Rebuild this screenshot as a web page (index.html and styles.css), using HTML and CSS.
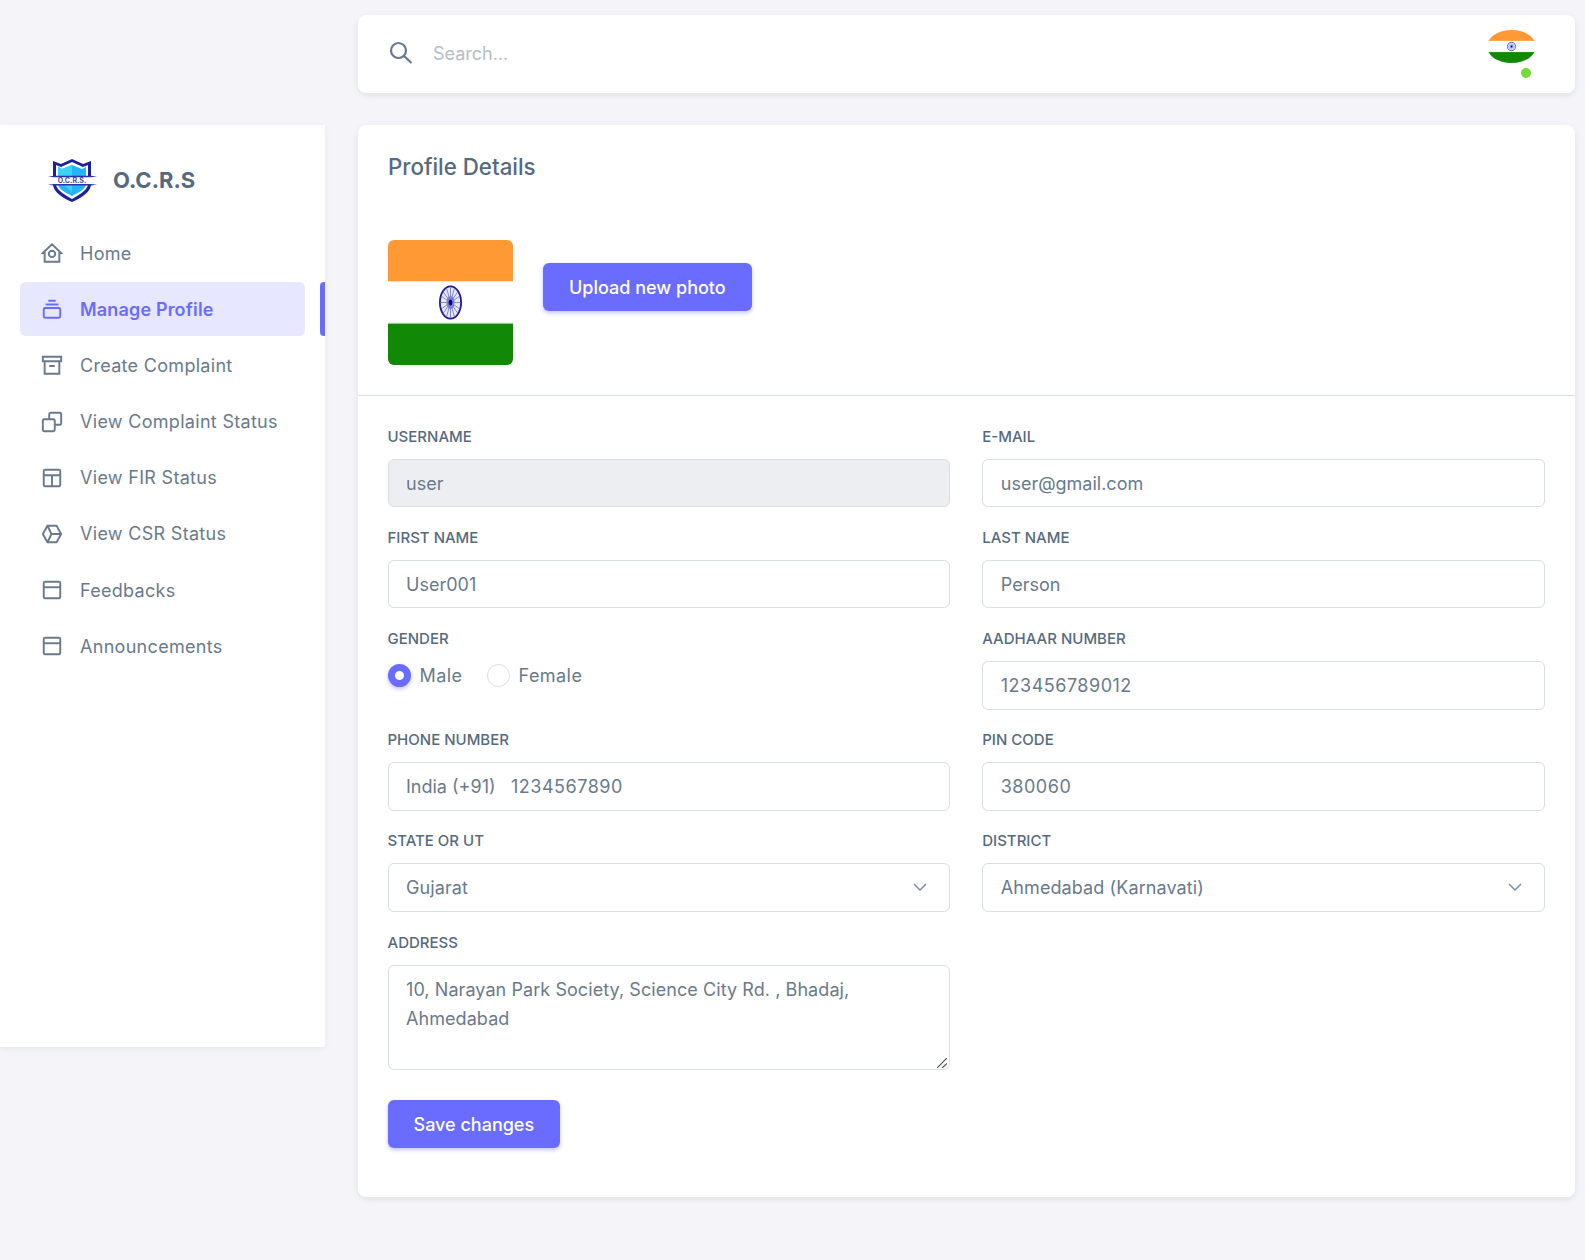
FILE: index.html
```html
<!DOCTYPE html>
<html lang="en">
<head>
    <meta charset="UTF-8">
    <meta name="viewport" content="width=device-width, initial-scale=1.0">
    <title>Profile Details</title>
    <link rel="stylesheet" href="styles.css">
</head>
<body>
    <svg class="defs" width="0" height="0" aria-hidden="true">
        <symbol id="flag" viewBox="0 0 124 124" preserveAspectRatio="none">
            <rect width="124" height="41" fill="#ff9933"/>
            <rect y="41" width="124" height="1" fill="#ffe3c4"/>
            <rect y="42" width="124" height="40" fill="#ffffff"/>
            <rect y="82" width="124" height="1" fill="#c9dcc4"/>
            <rect y="83" width="124" height="41" fill="#128807"/>
            <ellipse cx="62" cy="62" rx="10.500" ry="16" fill="#e6e8f8" stroke="#1c1c8c" stroke-width="1.800"/>
            <path d="M62 47v30M51.500 62h21M54.600 51 69.400 73M69.400 51 54.600 73M52.500 55.500l19 13M71.500 55.500l-19 13M58 47.500l8 29M66 47.500l-8 29" stroke="#5a5fc0" stroke-width=".7"/>
            <ellipse cx="62" cy="62" rx="4" ry="6.500" fill="#7d81d0"/>
            <ellipse cx="62" cy="62" rx="1.800" ry="3" fill="#000080"/>
        </symbol>
    </svg>

    <div class="layout">
        <aside class="sidebar">
            <div class="brand">
                <svg class="brand-logo" viewBox="0 0 50 46">
                    <path d="M5 5 L13 8 L24 3 L35 8 L43 5 V28 C43 36 33 42 24 46 C15 42 5 36 5 28 Z" fill="#1d1f9e"/>
                    <path d="M8 9 L13 11 L24 6 L35 11 L40 9 V28 C40 34 31 39 24 43 C17 39 8 34 8 28 Z" fill="#ffffff"/>
                    <path d="M10 11 L14 13 L24 9 L34 13 L38 11 V28 C38 33 30 37 24 40 C18 37 10 33 10 28 Z" fill="#27b4f5"/>
                    <path d="M10 11 L14 13 L24 9 V20 H10 Z M24 29 H16 L24 36 Z" fill="#38d5f8"/>
                    <path d="M0 20.500 L6 20 H43 L49 20.500 L43 29 H6 Z" fill="#ffffff"/>
                    <path d="M0 20.500 L6 19.800 H43 L49 20.500 L43 21.200 H6 Z M0 28.700 L6 28 H43 L49 28.700 L43 29.400 H6 Z" fill="#2f33a8"/>
                    <text x="24" y="27.300" text-anchor="middle" class="brand-logo-text">O.C.R.S.</text>
                </svg>
                <span class="brand-name">O.C.R.S</span>
            </div>
            <nav class="menu">
                <a class="menu-item">
                    <svg class="menu-icon" viewBox="0 0 24 24"><path d="M2 12 12 2.500 22 12h-2v9.500H4V12Z"/><circle cx="12" cy="13" r="3.500"/></svg>
                    Home
                </a>
                <a class="menu-item active">
                    <svg class="menu-icon" viewBox="0 0 24 24"><rect x="3" y="11" width="18" height="10.500" rx="1.500"/><path d="M5 7h14M8 3h8"/></svg>
                    Manage Profile
                </a>
                <a class="menu-item">
                    <svg class="menu-icon" viewBox="0 0 24 24"><path d="M2 3h20v5H2zM4 8v13.500h16V8M9 13h6"/></svg>
                    Create Complaint
                </a>
                <a class="menu-item">
                    <svg class="menu-icon" viewBox="0 0 24 24"><rect x="2" y="9" width="13" height="13" rx="1.500"/><path d="M9 9V3.500C9 2.700 9.700 2 10.500 2h10c.8 0 1.500.7 1.500 1.500v10c0 .8-.7 1.500-1.500 1.500H15"/></svg>
                    View Complaint Status
                </a>
                <a class="menu-item">
                    <svg class="menu-icon" viewBox="0 0 24 24"><rect x="3" y="3" width="18" height="18" rx="1.500"/><path d="M3 9h18M12 9v12"/></svg>
                    View FIR Status
                </a>
                <a class="menu-item">
                    <svg class="menu-icon" viewBox="0 0 24 24"><path d="M7 3h10l5 9-5 9H7l-5-9ZM7 3l4.500 9L7 21M11.500 12H22"/></svg>
                    View CSR Status
                </a>
                <a class="menu-item">
                    <svg class="menu-icon" viewBox="0 0 24 24"><rect x="3" y="3" width="18" height="18" rx="1.500"/><path d="M3 9h18"/></svg>
                    Feedbacks
                </a>
                <a class="menu-item">
                    <svg class="menu-icon" viewBox="0 0 24 24"><rect x="3" y="3" width="18" height="18" rx="1.500"/><path d="M3 9h18"/></svg>
                    Announcements
                </a>
            </nav>
        </aside>

        <main class="content">
            <header class="topbar">
                <svg class="search-icon" viewBox="0 0 24 24"><circle cx="9.500" cy="9.500" r="7.500"/><path d="m15 15 7.500 7"/></svg>
                <input class="search-input" type="text" placeholder="Search...">
                <div class="user">
                    <svg class="user-flag"><use href="#flag"/></svg>
                    <span class="user-dot"></span>
                </div>
            </header>

            <section class="card">
                <h1 class="card-title">Profile Details</h1>
                <div class="photo-row">
                    <svg class="photo"><use href="#flag"/></svg>
                    <button class="btn upload-btn" type="button">Upload new photo</button>
                </div>
                <hr class="divider">
                <form class="form">
                    <div class="field">
                        <label class="field-label" for="username">Username</label>
                        <input class="input" id="username" type="text" value="user" disabled>
                    </div>
                    <div class="field">
                        <label class="field-label" for="email">E-mail</label>
                        <input class="input" id="email" type="text" value="user@gmail.com">
                    </div>
                    <div class="field">
                        <label class="field-label" for="first">First Name</label>
                        <input class="input" id="first" type="text" value="User001">
                    </div>
                    <div class="field">
                        <label class="field-label" for="last">Last Name</label>
                        <input class="input" id="last" type="text" value="Person">
                    </div>
                    <div class="field">
                        <span class="field-label">Gender</span>
                        <div class="radios">
                            <label class="radio"><input type="radio" name="gender" checked>Male</label>
                            <label class="radio"><input type="radio" name="gender">Female</label>
                        </div>
                    </div>
                    <div class="field">
                        <label class="field-label" for="aadhaar">Aadhaar Number</label>
                        <input class="input num" id="aadhaar" type="text" value="123456789012">
                    </div>
                    <div class="field">
                        <label class="field-label" for="phone">Phone Number</label>
                        <div class="input phone">
                            <span class="phone-code">India (+91)</span>
                            <input class="phone-input num" id="phone" type="text" value="1234567890">
                        </div>
                    </div>
                    <div class="field">
                        <label class="field-label" for="pin">Pin Code</label>
                        <input class="input num" id="pin" type="text" value="380060">
                    </div>
                    <div class="field">
                        <label class="field-label" for="state">State or UT</label>
                        <div class="control">
                            <select class="input select" id="state"><option>Gujarat</option></select>
                            <svg class="chevron" viewBox="0 0 14 8"><path d="M1 1l6 6 6-6"/></svg>
                        </div>
                    </div>
                    <div class="field">
                        <label class="field-label" for="district">District</label>
                        <div class="control">
                            <select class="input select" id="district"><option>Ahmedabad (Karnavati)</option></select>
                            <svg class="chevron" viewBox="0 0 14 8"><path d="M1 1l6 6 6-6"/></svg>
                        </div>
                    </div>
                    <div class="field address-field">
                        <label class="field-label" for="address">Address</label>
                        <div class="control">
                            <textarea class="input textarea" id="address">10, Narayan Park Society, Science City Rd. , Bhadaj, Ahmedabad</textarea>
                            <svg class="grip" viewBox="0 0 10 10"><path d="M0 10 10 0M5 10l5-4.500"/></svg>
                        </div>
                    </div>
                    <div class="form-actions">
                        <button class="btn" type="button">Save changes</button>
                    </div>
                </form>
            </section>
        </main>
    </div>
</body>
</html>
```

FILE: styles.css
```css
* {
    box-sizing: border-box;
}
body {
    margin: 0;
    min-height: 1260px;
    background: #f5f5f9;
    color: #697a8d;
    font-family: "Inter", "Liberation Sans", sans-serif;
    font-size: 18px;
}
.defs {
    position: absolute;
}
.layout {
    display: flex;
    align-items: flex-start;
}

/* sidebar */
.sidebar {
    width: 325px;
    height: 922px;
    margin-top: 125px;
    background: #fff;
    box-shadow: 0 2px 6px rgba(67, 89, 113, .08);
}
.brand {
    display: flex;
    align-items: center;
    height: 108px;
    padding-left: 48px;
}
.brand-logo {
    width: 50px;
    height: 46px;
}
.brand-logo-text {
    font-size: 7px;
    font-weight: 700;
    fill: #3b4a9e;
}
.brand-name {
    margin: 2px 0 0 15px;
    color: #566a7f;
    font-size: 22px;
    font-weight: 700;
}
.menu {
    display: flex;
    flex-direction: column;
    gap: 2.200px;
    margin-top: -7px;
    padding-left: 20px;
}
.menu-item {
    position: relative;
    display: flex;
    align-items: center;
    gap: 17px;
    width: 285px;
    height: 54px;
    padding-left: 21px;
    border-radius: 6px;
    font-size: 18px;
    letter-spacing: .3px;
}
.menu-item.active {
    background: #e7e7ff;
    color: #696cff;
    font-weight: 600;
    letter-spacing: .17px;
}
.menu-item.active::after {
    content: "";
    position: absolute;
    top: 0;
    right: -20px;
    width: 5px;
    height: 54px;
    background: #696cff;
    border-radius: 4px 0 0 4px;
}
.menu-icon {
    flex: none;
    width: 22px;
    height: 22px;
    fill: none;
    stroke: currentColor;
    stroke-width: 2.100;
}

/* top bar */
.content {
    width: 1217px;
    margin-left: 33px;
    padding-top: 15px;
}
.topbar {
    display: flex;
    align-items: center;
    height: 78px;
    padding: 0 39px 0 31px;
    background: #fff;
    border-radius: 8px;
    box-shadow: 0 2px 6px rgba(67, 89, 113, .12);
}
.search-icon {
    flex: none;
    width: 24px;
    height: 24px;
    margin-bottom: 2px;
    fill: none;
    stroke: #697a8d;
    stroke-width: 2.200;
}
.search-input {
    flex: 1;
    margin: 0 0 2px 18px;
    border: 0;
    outline: 0;
    background: none;
    color: #697a8d;
    font: inherit;
}
.search-input::placeholder {
    color: #b4bdc6;
}
.user {
    position: relative;
    width: 49px;
    height: 33px;
    margin-bottom: 15px;
}
.user-flag {
    display: block;
    width: 49px;
    height: 33px;
    border-radius: 50%;
}
.user-dot {
    position: absolute;
    right: 5px;
    bottom: -15px;
    width: 10px;
    height: 10px;
    background: #71dd37;
    border-radius: 50%;
}

/* card */
.card {
    height: 1072px;
    margin-top: 32px;
    background: #fff;
    border-radius: 8px;
    box-shadow: 0 2px 6px rgba(67, 89, 113, .12);
}
.card-title {
    margin: 0;
    padding: 27px 30px 0;
    color: #566a7f;
    font-size: 22.300px;
    font-weight: 500;
    line-height: 30px;
}
.photo-row {
    display: flex;
    align-items: flex-start;
    gap: 30px;
    padding: 58px 30px 30px;
}
.photo {
    display: block;
    width: 125px;
    height: 125px;
    border-radius: 6px;
}
.upload-btn {
    margin-top: 23px;
    padding: 0 25.500px;
}
.divider {
    margin: 0;
    border: 0;
    border-top: 1px solid #d9dee3;
}
.btn {
    height: 48px;
    padding: 0 26px;
    border: 0;
    border-radius: 6px;
    background: #696cff;
    box-shadow: 0 2px 4px rgba(105, 108, 255, .4);
    color: #fff;
    font: inherit;
    font-weight: 500;
}

/* form */
.form {
    display: grid;
    grid-template-columns: 1fr 1fr;
    gap: 22.700px 32px;
    padding: 33px 30px 0 29.500px;
}
.field-label {
    display: block;
    margin-bottom: 14px;
    color: #566a7f;
    font-size: 15px;
    font-weight: 500;
    line-height: 16px;
    text-transform: uppercase;
}
.address-field {
    margin-top: 1px;
}
.input {
    display: block;
    width: 100%;
    height: 48.400px;
    padding: 0 17.500px;
    border: 1px solid #d9dee3;
    border-radius: 6px;
    background: #fff;
    color: #697a8d;
    font: inherit;
    outline: 0;
}
.input:disabled {
    background: #eceef1;
    opacity: 1;
}
.num {
    letter-spacing: .5px;
}
.phone {
    display: flex;
    align-items: center;
    gap: 15.500px;
}
.phone-code {
    flex: none;
}
.phone-input {
    flex: 1;
    min-width: 0;
    padding: 0;
    border: 0;
    outline: 0;
    color: #697a8d;
    font: inherit;
    letter-spacing: .5px;
}
.control {
    position: relative;
}
.select {
    appearance: none;
    letter-spacing: .1px;
}
.chevron {
    position: absolute;
    top: 20px;
    right: 23px;
    width: 14px;
    height: 8px;
    fill: none;
    stroke: #7f8fa1;
    stroke-width: 1.500;
    pointer-events: none;
}
.textarea {
    height: 105px;
    padding: 9px 17.500px;
    line-height: 29px;
    letter-spacing: .07px;
    resize: none;
}
.grip {
    position: absolute;
    right: 3px;
    bottom: 2px;
    width: 10px;
    height: 10px;
    fill: none;
    stroke: #555;
    stroke-width: 1.200;
    pointer-events: none;
}
.radios {
    display: flex;
    gap: 24px;
    margin-top: 17px;
}
.radio {
    display: flex;
    align-items: center;
    gap: 9px;
    height: 23px;
    letter-spacing: .45px;
}
.radio input {
    appearance: none;
    width: 23px;
    height: 23px;
    margin: 0;
    background: #fff;
    border: 1px solid #d9dee3;
    border-radius: 50%;
}
.radio input:checked {
    background: #fff;
    border: 7.500px solid #696cff;
    box-shadow: 0 2px 4px rgba(105, 108, 255, .4);
}
.form-actions {
    grid-column: 1 / -1;
    margin-top: 7px;
}
```
